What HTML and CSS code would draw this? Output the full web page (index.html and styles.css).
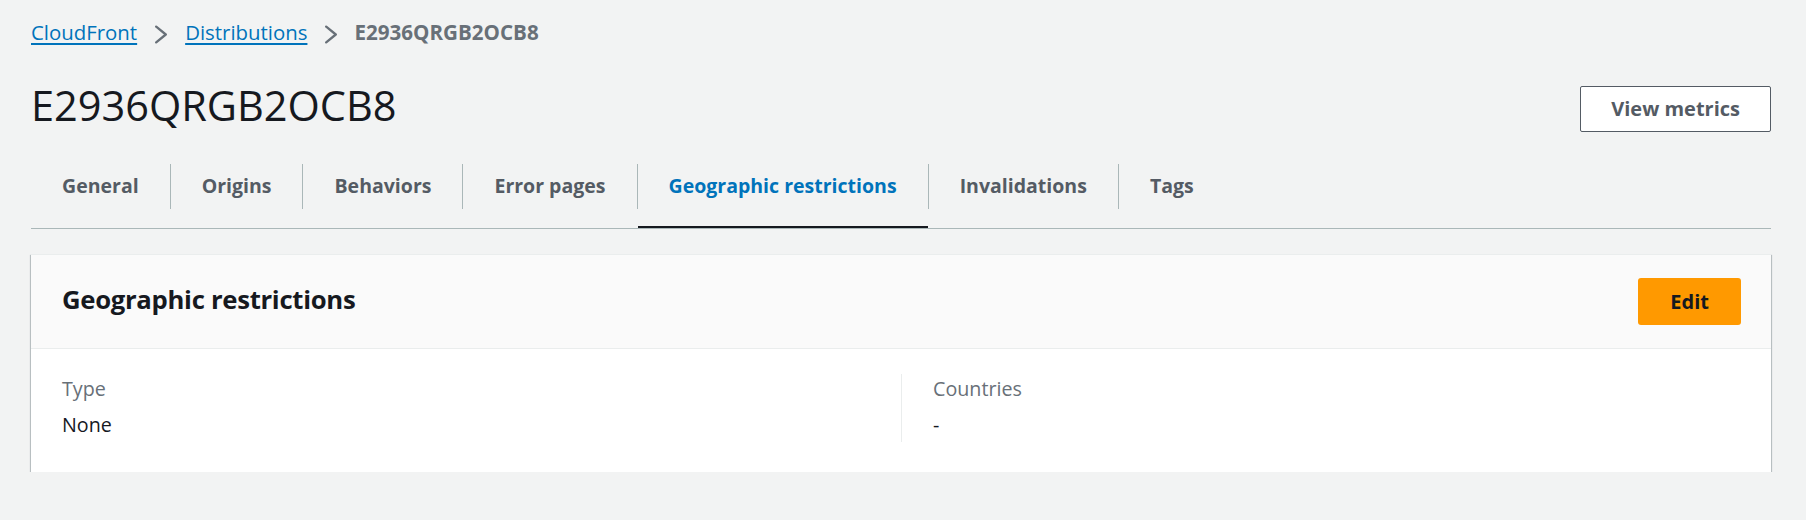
FILE: index.html
```html
<!DOCTYPE html>
<html lang="en">
<head>
<meta charset="utf-8">
<title>E2936QRGB2OCB8 | CloudFront</title>
<link rel="stylesheet" href="styles.css">
</head>
<body>
<div class="page">
  <nav class="breadcrumbs">
    <a class="crumb-link" href="#">CloudFront</a>
    <svg class="chev" width="14" height="19" viewBox="0 0 14 19"><polyline points="2.2,1.6 11.8,9.5 2.2,17.4" /></svg>
    <a class="crumb-link" href="#">Distributions</a>
    <svg class="chev" width="14" height="19" viewBox="0 0 14 19"><polyline points="2.2,1.6 11.8,9.5 2.2,17.4" /></svg>
    <span class="crumb-current">E2936QRGB2OCB8</span>
  </nav>

  <header class="page-header">
    <h1 class="page-title">E2936QRGB2OCB8</h1>
    <button class="btn-normal" type="button">View metrics</button>
  </header>

  <ul class="tabs">
    <li class="tab"><span class="tab-label">General</span></li>
    <li class="tab"><span class="tab-label">Origins</span></li>
    <li class="tab"><span class="tab-label">Behaviors</span></li>
    <li class="tab"><span class="tab-label">Error pages</span></li>
    <li class="tab tab-active"><span class="tab-label">Geographic restrictions</span></li>
    <li class="tab"><span class="tab-label">Invalidations</span></li>
    <li class="tab"><span class="tab-label">Tags</span></li>
  </ul>

  <section class="card">
    <div class="card-header">
      <h2 class="card-title">Geographic restrictions</h2>
      <button class="btn-primary" type="button">Edit</button>
    </div>
    <div class="card-body">
      <div class="kv-col">
        <div class="kv-label">Type</div>
        <div class="kv-value">None</div>
      </div>
      <div class="kv-col kv-col-divided">
        <div class="kv-label">Countries</div>
        <div class="kv-value">-</div>
      </div>
    </div>
  </section>
</div>
</body>
</html>
```

FILE: styles.css
```css
* {
  box-sizing: border-box;
}

html, body {
  margin: 0;
  padding: 0;
}

body {
  background: #f2f3f3;
  font-family: "Open Sans", "Noto Sans", Arial, sans-serif;
  color: #16191f;
  font-size: 20px;
  line-height: 30px;
}

.page {
  padding: 17px 35px 0 31px;
}

/* Breadcrumbs */
.breadcrumbs {
  display: flex;
  align-items: center;
  gap: 17px;
  height: 30px;
}

.crumb-link {
  color: #0073bb;
  text-decoration: underline;
  text-underline-offset: 3px;
  text-decoration-thickness: 1.5px;
  font-size: 20.4px;
}

.chev {
  margin-top: 5px;
  flex: none;
}

.chev polyline {
  fill: none;
  stroke: #687078;
  stroke-width: 2.3;
  stroke-linecap: round;
  stroke-linejoin: round;
}

.crumb-current {
  color: #687078;
  font-size: 20.6px;
  font-weight: 700;
  margin-left: -1px;
}

/* Page header */
.page-header {
  display: flex;
  justify-content: space-between;
  align-items: flex-start;
  margin-top: 33px;
}

.page-title {
  margin: 0;
  font-size: 41.5px;
  line-height: 50px;
  font-weight: 400;
  color: #16191f;
}

.btn-normal {
  margin-top: 6px;
  font-family: inherit;
  font-size: 20px;
  line-height: 30px;
  font-weight: 700;
  color: #545b64;
  background: #ffffff;
  border: 1px solid #545b64;
  border-radius: 2px;
  padding: 7px 30px;
  cursor: pointer;
}

/* Tabs */
.tabs {
  list-style: none;
  margin: 32px 0 0;
  padding: 0;
  display: flex;
  border-bottom: 1px solid #aab7b8;
}

.tab {
  position: relative;
  padding-bottom: 19px;
}

.tab-label {
  display: block;
  padding: 7px 31px 8px;
  border-left: 1px solid #aab7b8;
  font-size: 19.52px;
  font-weight: 700;
  color: #545b64;
  line-height: 30px;
  white-space: nowrap;
}

.tab:first-child .tab-label {
  border-left: none;
}

.tab-active .tab-label {
  color: #0073bb;
}

.tab-active::after {
  content: "";
  position: absolute;
  left: 1px;
  right: 0;
  bottom: 0;
  height: 2px;
  background: #16191f;
}

/* Card */
.card {
  margin-top: 25px;
  background: #ffffff;
  border-top: 1px solid #eaeded;
  box-shadow: 0 1px 1px 0 rgba(0, 28, 36, 0.4), 1px 1px 1px 0 rgba(0, 28, 36, 0.18), -1px 1px 1px 0 rgba(0, 28, 36, 0.18);
}

.card-header {
  display: flex;
  justify-content: space-between;
  align-items: center;
  background: #fafafa;
  padding: 23px 30px 23px 31px;
  border-bottom: 1px solid #eaeded;
}

.card-title {
  margin: 0 0 3px;
  font-size: 25.7px;
  letter-spacing: -0.3px;
  line-height: 36px;
  font-weight: 700;
  color: #16191f;
}

.btn-primary {
  font-family: inherit;
  font-size: 20px;
  line-height: 31px;
  font-weight: 700;
  color: #16191f;
  background: #ff9900;
  border: none;
  border-radius: 3px;
  padding: 8px 32px;
  cursor: pointer;
}

.card-body {
  display: grid;
  grid-template-columns: 1fr 1fr;
  padding: 25px 31px 30px;
}

.kv-col {
  display: flex;
  flex-direction: column;
  gap: 6px;
  padding-bottom: 2px;
}

.kv-col-divided {
  border-left: 1px solid #eaeded;
  padding-left: 31px;
}

.kv-label {
  color: #687078;
  font-size: 19.7px;
  line-height: 30px;
}

.kv-value {
  color: #16191f;
  font-size: 19.7px;
  line-height: 30px;
}
```
